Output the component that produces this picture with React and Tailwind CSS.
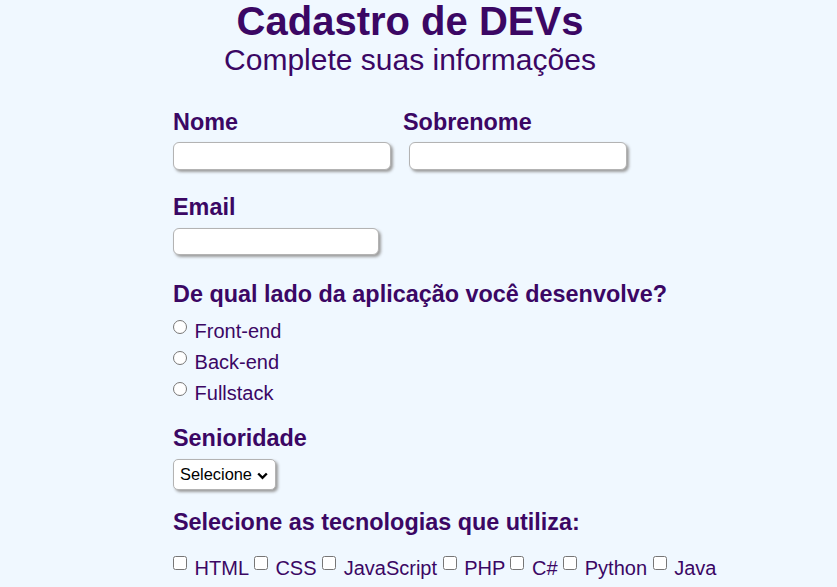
export default function App() {
  const inp = `block h-[28px] w-[218px] bg-white border border-[#b3b3b3] rounded-[6px] shadow-[2px_2px_3px_#9c9c9c] px-1 text-[16px] text-black`
  const h3 = `text-[23.4px] font-bold leading-[27px]`
  const lados = ['Front-end', 'Back-end', 'Fullstack']
  const techs = ['HTML', 'CSS', 'JavaScript', 'PHP', 'C#', 'Python', 'Java']

  return (
    <div className="min-h-screen bg-[#f0f8ff] font-['Liberation_Sans',Arial,sans-serif] text-[#3b0764]">
      <div className="w-[820px] text-center">
        <h1 className="text-[40px] font-bold leading-[43px]">Cadastro de DEVs</h1>
        <h2 className="text-[30px] leading-[34px]">Complete suas informações</h2>
      </div>

      <form className="ml-[173px] pt-[32px]">
        <div className={`flex ${h3}`}>
          <label className="w-[230px]">Nome</label>
          <label>Sobrenome</label>
        </div>
        <div className="flex gap-[18px] mt-[6px]">
          <input type="text" className={inp} />
          <input type="text" className={inp} />
        </div>

        <label className={`block mt-[24px] ${h3}`}>Email</label>
        <input type="email" className={`${inp} mt-[7px] !h-[27px] !w-[206px]`} />

        <h3 className={`mt-[26px] ${h3}`}>De qual lado da aplicação você desenvolve?</h3>
        <div className="mt-[8px] text-[20px]">
          {lados.map(l => (
            <label key={l} className="block h-[31px] leading-[31px]">
              <input type="radio" name="lado" className="w-[14px] h-[14px] mr-[2px] align-[4px]" /> {l}
            </label>
          ))}
        </div>

        <label className={`block mt-[16px] ${h3}`}>Senioridade</label>
        <div className="mt-[7px] flex items-center h-[31px] w-[103px] bg-white border border-[#b3b3b3] rounded-[5px] shadow-[2px_2px_3px_#9c9c9c] pl-[6px] text-[16.4px] text-black">
          <span>Selecione</span>
          <svg className="ml-[5px] mt-[2px]" width="11" height="8" viewBox="0 0 11 8">
            <path d="M1.2 1.5 L5.5 5.8 L9.8 1.5" fill="none" stroke="#000" strokeWidth="2.4" />
          </svg>
        </div>

        <h3 className={`mt-[19px] ${h3}`}>Selecione as tecnologias que utiliza:</h3>
        <div className="mt-[20px] text-[20px] leading-[23px] whitespace-nowrap">
          {techs.map(t => (
            <label key={t}>
              <input type="checkbox" className="w-[14px] h-[14px] mr-[2px] align-[5px]" />{' '}{t}{' '}
            </label>
          ))}
        </div>
      </form>
    </div>
  )
}
